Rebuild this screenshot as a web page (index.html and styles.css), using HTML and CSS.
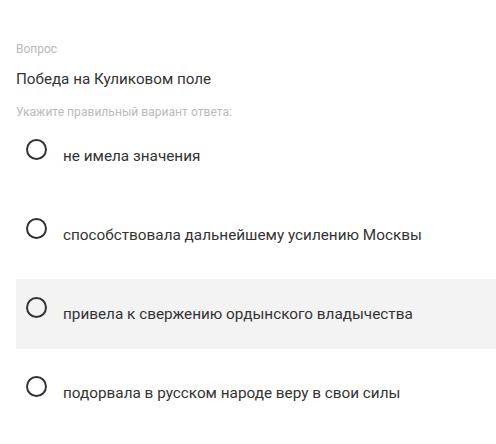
FILE: index.html
```html
<!DOCTYPE html>
<html lang="ru">
<head>
<meta charset="utf-8">
<link rel="stylesheet" href="styles.css">
</head>
<body>
<div class="question">
  <div class="label">Вопрос</div>
  <div class="title">Победа на Куликовом поле</div>
  <div class="hint">Укажите правильный вариант ответа:</div>
  <div class="options">
    <div class="option"><span class="radio"></span><span class="text">не имела значения</span></div>
    <div class="option"><span class="radio"></span><span class="text">способствовала дальнейшему усилению Москвы</span></div>
    <div class="option option-hover"><span class="radio"></span><span class="text">привела к свержению ордынского владычества</span></div>
    <div class="option"><span class="radio"></span><span class="text">подорвала в русском народе веру в свои силы</span></div>
  </div>
</div>
</body>
</html>
```
FILE: styles.css
```css
html, body {
  margin: 0;
  padding: 0;
  background: #ffffff;
}
body {
  font-family: Roboto, "Liberation Sans", sans-serif;
  color: #333333;
}
.question {
  padding: 41px 0 0 16px;
}
.label {
  font-size: 12px;
  line-height: 16px;
  color: #b8b8b8;
}
.title {
  margin-top: 13px;
  font-size: 15.2px;
  line-height: 18px;
  color: #333333;
}
.hint {
  margin-top: 16px;
  font-size: 12.1px;
  line-height: 16px;
  color: #bbbbbb;
}
.options {
  margin-top: 1px;
  display: flex;
  flex-direction: column;
  gap: 9px;
}
.option {
  height: 70px;
  display: flex;
  align-items: center;
  position: relative;
}
.option-hover {
  background: #f3f3f3;
}
.radio {
  position: absolute;
  left: 10px;
  top: 18px;
  width: 17px;
  height: 17px;
  border: 2px solid #333333;
  border-radius: 50%;
}
.text {
  margin-left: 47px;
  font-size: 15.3px;
  line-height: 18px;
  color: #333333;
}
```
